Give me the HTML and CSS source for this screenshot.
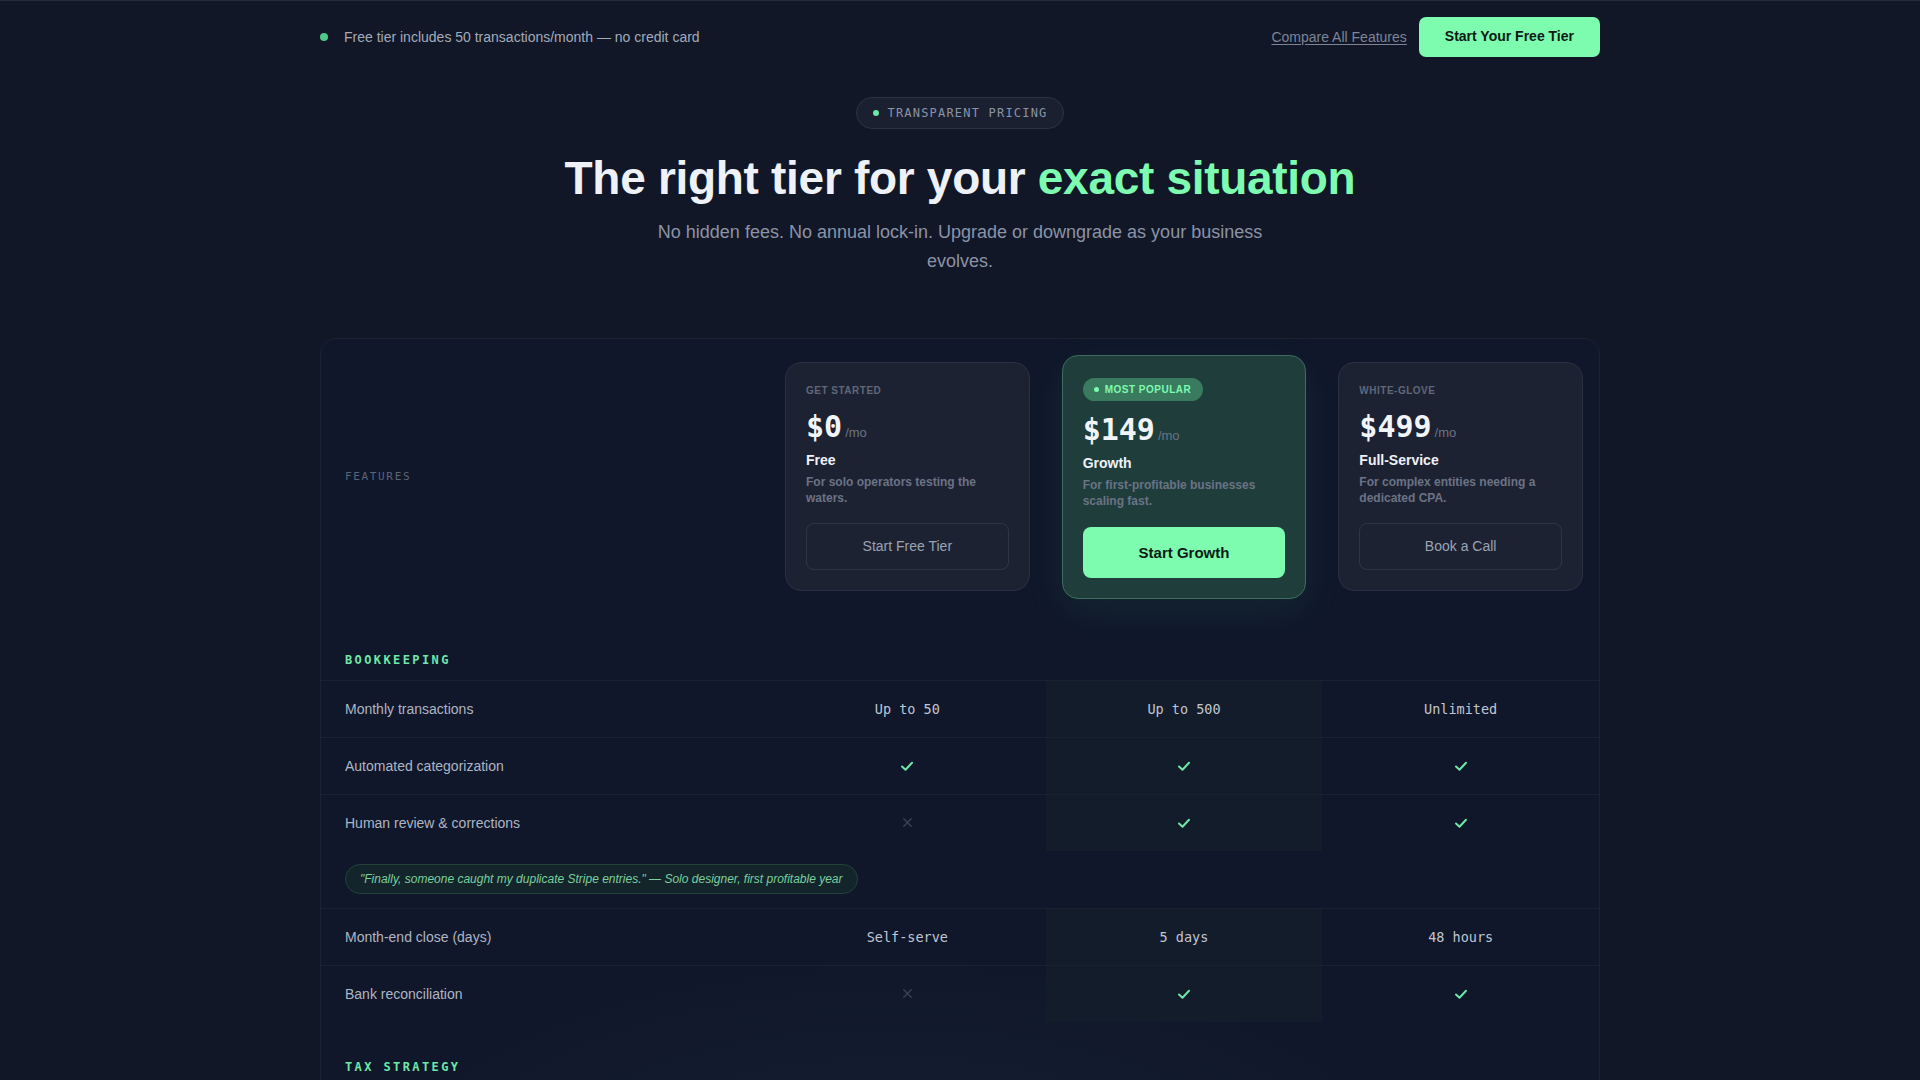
FILE: index.html
```html
<!DOCTYPE html>
<html lang="en">
<head>
<meta charset="utf-8">
<title>Pricing</title>
<link rel="stylesheet" href="styles.css">
</head>
<body>
<header class="topbar">
  <div class="topbar-note"><span class="dot"></span>Free tier includes 50 transactions/month — no credit card</div>
  <div class="topbar-actions">
    <a class="link" href="#">Compare All Features</a>
    <a class="btn-primary" href="#">Start Your Free Tier</a>
  </div>
</header>

<section class="hero">
  <div class="eyebrow"><span class="dot small"></span>TRANSPARENT PRICING</div>
  <h1>The right tier for your <span class="accent">exact situation</span></h1>
  <p class="sub">No hidden fees. No annual lock-in. Upgrade or downgrade as your business evolves.</p>
</section>

<main class="table">
  <div class="head-row">
    <div class="features-label">FEATURES</div>
    <div class="col">
      <div class="card">
        <div class="tier-label">GET STARTED</div>
        <div class="price">$0<span class="per">/mo</span></div>
        <div class="tier-name">Free</div>
        <div class="tier-desc">For solo operators testing the waters.</div>
        <a class="btn-outline" href="#">Start Free Tier</a>
      </div>
    </div>
    <div class="col">
      <div class="card card-pop">
        <div class="pop-badge"><span class="dot tiny"></span>MOST POPULAR</div>
        <div class="price">$149<span class="per">/mo</span></div>
        <div class="tier-name">Growth</div>
        <div class="tier-desc">For first-profitable businesses scaling fast.</div>
        <a class="btn-fill" href="#">Start Growth</a>
      </div>
    </div>
    <div class="col">
      <div class="card">
        <div class="tier-label">WHITE-GLOVE</div>
        <div class="price">$499<span class="per">/mo</span></div>
        <div class="tier-name">Full-Service</div>
        <div class="tier-desc">For complex entities needing a dedicated CPA.</div>
        <a class="btn-outline" href="#">Book a Call</a>
      </div>
    </div>
  </div>

  <div class="section-row">BOOKKEEPING</div>

  <div class="row">
    <div class="feat">Monthly transactions</div>
    <div class="cell mono">Up to 50</div>
    <div class="cell mono hl">Up to 500</div>
    <div class="cell mono">Unlimited</div>
  </div>
  <div class="row">
    <div class="feat">Automated categorization</div>
    <div class="cell"><svg class="check" viewBox="0 0 16 16"><polyline points="3,8.5 6.5,11.8 13,4.8"/></svg></div>
    <div class="cell hl"><svg class="check" viewBox="0 0 16 16"><polyline points="3,8.5 6.5,11.8 13,4.8"/></svg></div>
    <div class="cell"><svg class="check" viewBox="0 0 16 16"><polyline points="3,8.5 6.5,11.8 13,4.8"/></svg></div>
  </div>
  <div class="row">
    <div class="feat">Human review &amp; corrections</div>
    <div class="cell"><svg class="cross" viewBox="0 0 12 12"><path d="M2 2L10 10M10 2L2 10"/></svg></div>
    <div class="cell hl"><svg class="check" viewBox="0 0 16 16"><polyline points="3,8.5 6.5,11.8 13,4.8"/></svg></div>
    <div class="cell"><svg class="check" viewBox="0 0 16 16"><polyline points="3,8.5 6.5,11.8 13,4.8"/></svg></div>
  </div>
  <div class="quote-row">
    <span class="quote">"Finally, someone caught my duplicate Stripe entries." — Solo designer, first profitable year</span>
  </div>
  <div class="row">
    <div class="feat">Month-end close (days)</div>
    <div class="cell mono">Self-serve</div>
    <div class="cell mono hl">5 days</div>
    <div class="cell mono">48 hours</div>
  </div>
  <div class="row">
    <div class="feat">Bank reconciliation</div>
    <div class="cell"><svg class="cross" viewBox="0 0 12 12"><path d="M2 2L10 10M10 2L2 10"/></svg></div>
    <div class="cell hl"><svg class="check" viewBox="0 0 16 16"><polyline points="3,8.5 6.5,11.8 13,4.8"/></svg></div>
    <div class="cell"><svg class="check" viewBox="0 0 16 16"><polyline points="3,8.5 6.5,11.8 13,4.8"/></svg></div>
  </div>

  <div class="section-row">TAX STRATEGY</div>

  <div class="row">
    <div class="feat">Quarterly estimated taxes</div>
    <div class="cell"><svg class="cross" viewBox="0 0 12 12"><path d="M2 2L10 10M10 2L2 10"/></svg></div>
    <div class="cell hl"><svg class="check" viewBox="0 0 16 16"><polyline points="3,8.5 6.5,11.8 13,4.8"/></svg></div>
    <div class="cell"><svg class="check" viewBox="0 0 16 16"><polyline points="3,8.5 6.5,11.8 13,4.8"/></svg></div>
  </div>
  <div class="row">
    <div class="feat">Annual tax filing</div>
    <div class="cell mono">Add-on</div>
    <div class="cell mono hl">Included</div>
    <div class="cell mono">Included</div>
  </div>
</main>
</body>
</html>
```

FILE: styles.css
```css
* { box-sizing: border-box; }

html, body {
  margin: 0;
  padding: 0;
}

body {
  background: #111726;
  color: #e8ecf3;
  font-family: "Liberation Sans", Arial, sans-serif;
  border-top: 1px solid #242b3b;
  min-height: 1080px;
}

a { text-decoration: none; color: inherit; }

.dot {
  display: inline-block;
  width: 8px;
  height: 8px;
  border-radius: 50%;
  background: #4fc889;
  flex: none;
}
.dot.small { width: 6px; height: 6px; background: #6ee7a7; }
.dot.tiny { width: 5px; height: 5px; background: #7dfbb0; }

/* top bar */
.topbar {
  max-width: 1280px;
  margin: 0 auto;
  padding: 16px 0 17px;
  display: flex;
  align-items: center;
  justify-content: space-between;
}
.topbar-note {
  display: flex;
  align-items: center;
  gap: 16px;
  font-size: 14px;
  color: #a3abbb;
}
.topbar-actions {
  display: flex;
  align-items: center;
  gap: 12px;
}
.link {
  font-size: 14px;
  color: #7d8597;
  text-decoration: underline;
  text-underline-offset: 2px;
}
.btn-primary {
  display: inline-block;
  background: #7dfcb0;
  color: #0d1a15;
  font-weight: 700;
  font-size: 14px;
  line-height: 17px;
  padding: 11px 26px 12px;
  border-radius: 7px;
}

/* hero */
.hero {
  display: flex;
  flex-direction: column;
  align-items: center;
  text-align: center;
  padding-top: 23px;
}
.eyebrow {
  display: inline-flex;
  align-items: center;
  gap: 8px;
  height: 32px;
  padding: 0 15px 0 16px;
  border: 1px solid #2b3242;
  background: #1a2030;
  border-radius: 16px;
  font-family: "DejaVu Sans Mono", "Liberation Mono", monospace;
  font-size: 12px;
  letter-spacing: 0.1em;
  color: #8b93a7;
}
h1 {
  margin: 22px 0 0;
  font-size: 46px;
  line-height: 55px;
  font-weight: 700;
  letter-spacing: -0.3px;
  color: #eef1f7;
}
.accent { color: #7dfbb0; }
.sub {
  margin: 12px 0 0;
  max-width: 640px;
  font-size: 18px;
  line-height: 28.8px;
  color: #8b93a7;
}

/* table */
.table {
  max-width: 1280px;
  margin: 62px auto 0;
  border: 1px solid #1b2232;
  border-radius: 16px;
  background: radial-gradient(ellipse 60% 40% at 45% 100%, rgba(28, 52, 62, 0.35), rgba(17, 23, 38, 0) 70%), #10172a;
  overflow: hidden;
}
.head-row,
.row {
  display: grid;
  grid-template-columns: 448px repeat(3, 1fr);
}
.head-row {
  padding: 16px 0;
  align-items: center;
}
.features-label {
  padding-left: 24px;
  font-family: "DejaVu Sans Mono", "Liberation Mono", monospace;
  font-size: 11px;
  letter-spacing: 0.15em;
  color: #5b6478;
}
.col {
  padding: 0 16px;
}
.card {
  background: #1d2232;
  border: 1px solid #2a3142;
  border-radius: 16px;
  padding: 20px;
  display: flex;
  flex-direction: column;
}
.card-pop {
  background: #1f3d3b;
  border-color: #3c6d5d;
  box-shadow: 0 12px 40px rgba(80, 220, 150, 0.08);
}
.tier-label {
  margin-top: 2px;
  font-size: 10px;
  line-height: 12px;
  font-weight: 700;
  letter-spacing: 0.05em;
  color: #5f6779;
}
.pop-badge {
  align-self: flex-start;
  display: inline-flex;
  align-items: center;
  gap: 6px;
  height: 23px;
  padding: 0 12px 0 11px;
  border-radius: 12px;
  background: #3a7a5e;
  color: #7dfbb0;
  font-size: 10px;
  font-weight: 700;
  letter-spacing: 0.05em;
  margin-top: 2px;
  margin-bottom: -1px;
}
.price {
  margin-top: 16px;
  font-family: "DejaVu Sans Mono", "Liberation Mono", monospace;
  font-size: 30px;
  line-height: 28px;
  font-weight: 700;
  color: #f1f4f9;
  display: flex;
  align-items: baseline;
}
.per {
  font-family: "Liberation Sans", Arial, sans-serif;
  font-size: 13px;
  font-weight: 400;
  color: #6b7385;
  margin-left: 3px;
}
.tier-name {
  margin-top: 3px;
  font-size: 14px;
  line-height: 20px;
  font-weight: 700;
  color: #eef1f7;
}
.tier-desc {
  margin-top: 4px;
  font-size: 12px;
  line-height: 16px;
  font-weight: 700;
  color: #6b7385;
}
.btn-outline {
  margin-top: 17px;
  display: block;
  text-align: center;
  border: 1px solid #2e3546;
  border-radius: 8px;
  font-size: 14px;
  line-height: 17px;
  padding: 14px 0;
  color: #9aa3b5;
}
.btn-fill {
  margin-top: 18px;
  display: block;
  text-align: center;
  background: #7dfcb0;
  border-radius: 8px;
  font-size: 15px;
  font-weight: 700;
  line-height: 19px;
  padding: 16px 0;
  color: #0b1a14;
}

.section-row {
  padding: 38px 24px 13px;
  font-family: "DejaVu Sans Mono", "Liberation Mono", monospace;
  font-size: 12px;
  line-height: 14px;
  font-weight: 700;
  letter-spacing: 0.2em;
  color: #6ee7a7;
}
.row {
  border-top: 1px solid #1a2131;
  height: 57px;
}
.feat {
  display: flex;
  align-items: center;
  padding-left: 24px;
  font-size: 14px;
  color: #aeb5c3;
}
.cell {
  display: flex;
  align-items: center;
  justify-content: center;
  font-size: 14px;
  color: #c0c6d2;
}
.cell.mono {
  font-family: "DejaVu Sans Mono", "Liberation Mono", monospace;
  font-size: 13.5px;
}
.cell.hl {
  background: #131c2b;
}
.check {
  width: 16px;
  height: 16px;
  fill: none;
  stroke: #6ee7a7;
  stroke-width: 2;
  stroke-linecap: round;
  stroke-linejoin: round;
}
.cross {
  width: 11px;
  height: 11px;
  fill: none;
  stroke: #3a4254;
  stroke-width: 1.5;
  stroke-linecap: round;
}
.quote-row {
  height: 57px;
  display: flex;
  align-items: center;
  padding-left: 24px;
}
.quote {
  display: inline-flex;
  align-items: center;
  height: 30px;
  padding: 0 14px;
  border: 1px solid #244139;
  background: #13252a;
  border-radius: 15px;
  font-size: 12px;
  font-style: italic;
  color: #7ccf9f;
}
```
